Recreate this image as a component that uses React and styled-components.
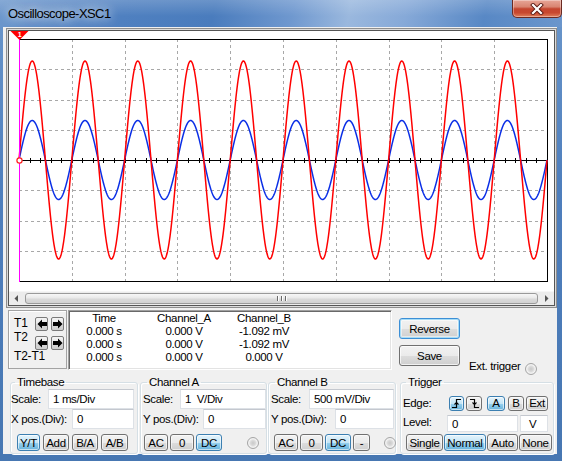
import React from 'react';
import styled, { createGlobalStyle, css } from 'styled-components';

const Global = createGlobalStyle`
  html, body { margin: 0; padding: 0; overflow: hidden; background: #fff; }
  body { font-family: "Liberation Sans", Arial, sans-serif; }
  * { box-sizing: border-box; }
`;

const Window = styled.div`
  width: 562px;
  height: 461px;
  display: flex;
  flex-direction: column;
  background: linear-gradient(180deg, #6b97cb 0%, #4f7fbd 40%, #4777b2 100%);
  font-family: "Liberation Sans", Arial, sans-serif;
  font-size: 11px;
  letter-spacing: -0.35px;
  color: #000;
`;

const TitleBar = styled.div`
  height: 27px;
  flex: none;
  display: flex;
  align-items: flex-start;
  background:
    linear-gradient(180deg, rgba(255,255,255,0.18) 0%, rgba(255,255,255,0) 60%),
    linear-gradient(100deg, #6c97cc 0%, #4f80c0 22%, #4a7cbd 38%, #6f98cf 52%, #9ab8de 62%, #86a9d8 72%, #5888c5 86%, #6b96cc 100%);
`;

const Title = styled.div`
  flex: 1;
  padding-left: 8px;
  line-height: 27px;
  font-size: 13px;
  letter-spacing: -0.55px;
  color: #000;
  text-shadow: 0 0 8px rgba(255,255,255,0.9), 0 0 14px rgba(255,255,255,0.6);
`;

const CloseButton = styled.div`
  width: 50px;
  height: 18px;
  border: 1px solid #6b2a22;
  border-top: none;
  border-radius: 0 0 5px 5px;
  background: linear-gradient(180deg, #e7a597 0%, #d98572 40%, #c4452f 52%, #c8482f 75%, #e0805c 100%);
  box-shadow: inset 0 0 0 1px rgba(255,255,255,0.35);
  display: flex;
  align-items: center;
  justify-content: center;
`;

const Client = styled.div`
  flex: 1;
  margin: 0 5px 7px 3px;
  background: #f0f0f0;
  display: flex;
  flex-direction: column;
`;

const ScopePanel = styled.div`
  margin: 1px 0 0 3px;
  border: 1px solid #8e8e8e;
  padding: 1px;
  background: #dcdcdc;
`;

const Screen = styled.div`
  border: 1px solid #555;
  background: #fff;
  display: flex;
  flex-direction: column;
`;

const Plot = styled.svg`
  display: block;
  width: 545px;
  height: 260px;
`;

const HScroll = styled.div`
  height: 14px;
  display: flex;
  align-items: center;
  background: #ececec;
  border-top: 1px solid #f6f6f6;
`;

const ScrollArrow = styled.div`
  width: 15px;
  height: 13px;
  display: flex;
  align-items: center;
  justify-content: center;
`;

const Thumb = styled.div`
  flex: 1;
  height: 11px;
  margin: 0 1px;
  border: 1px solid #9a9a9a;
  border-radius: 3px;
  background: linear-gradient(180deg, #f7f7f7 0%, #e9e9e9 45%, #dadada 55%, #d2d2d2 100%);
  display: flex;
  align-items: center;
  justify-content: center;
  gap: 1px;
`;

const Grip = styled.span`
  width: 1px;
  height: 5px;
  background: #6a6a6a;
  box-shadow: 1px 0 0 #fff;
  margin: 0 1px;
`;

const Readout = styled.div`
  margin-top: 2px;
  height: 60px;
  display: flex;
  align-items: flex-start;
`;

const CursorBox = styled.div`
  margin-left: 5px;
  width: 59px;
  height: 59px;
  border: 1px solid #a3a3a3;
  box-shadow: inset 1px 1px 0 #fff;
  display: flex;
  padding-left: 5px;
`;

const CursorLabels = styled.div`
  width: 21px;
  padding-top: 6px;
  display: flex;
  flex-direction: column;
  font-size: 12px;
  letter-spacing: -0.2px;
`;

const CursorLabel = styled.div`
  line-height: 13px;
  height: 14px;
  white-space: nowrap;
  margin-top: ${p => p.$mt || 0}px;
`;

const ArrowGrid = styled.div`
  padding-top: 6px;
  display: grid;
  grid-template-columns: 13px 13px;
  column-gap: 3px;
  row-gap: 5px;
  align-content: start;
`;

const ArrowBtn = styled.div`
  width: 13px;
  height: 14px;
  border: 1px solid #7a7a7a;
  border-radius: 2px;
  background: linear-gradient(180deg, #f4f4f4 0%, #e6e6e6 50%, #d8d8d8 51%, #cdcdcd 100%);
  display: flex;
  align-items: center;
  justify-content: center;
`;

const DataTable = styled.div`
  margin-left: 1px;
  width: 324px;
  height: 60px;
  background: #fff;
  border: 1px solid;
  border-color: #a0a0a0 #ffffff #ffffff #a0a0a0;
  box-shadow: inset 1px 1px 0 #696969, inset -1px -1px 0 #e3e3e3;
  padding: 1px 0 0 2px;
  display: grid;
  grid-template-columns: 66px 94px 66px;
  grid-auto-rows: 13px;
  font-size: 11.5px;
  line-height: 13px;
`;

const Cell = styled.div`
  text-align: center;
  white-space: nowrap;
`;

const SideButtons = styled.div`
  margin-left: 7px;
  padding-top: 8px;
  display: flex;
  flex-direction: column;
  gap: 6px;
`;

const SideRow = styled.div`
  display: flex;
  align-items: flex-end;
`;

const BigButton = styled.div`
  width: 61px;
  height: 21px;
  border: 1px solid ${p => (p.$default ? '#3c8fd6' : '#707070')};
  border-radius: 3px;
  background: linear-gradient(180deg, #f2f2f2 0%, #ebebeb 50%, #dddddd 51%, #cfcfcf 100%);
  box-shadow: ${p => (p.$default ? 'inset 0 0 0 1px #a6dcf7, inset 0 0 0 2px rgba(255,255,255,0.5)' : 'inset 0 0 0 1px rgba(255,255,255,0.7)')};
  display: flex;
  align-items: center;
  justify-content: center;
  font-size: 11.5px;
`;

const ExtLabel = styled.div`
  margin-left: 9px;
  line-height: 13px;
  margin-bottom: -7px;
  font-size: 11.5px;
  white-space: nowrap;
`;

const Radio = styled.div`
  width: 12px;
  height: 12px;
  flex: none;
  border-radius: 50%;
  border: 1px solid #a5a5a5;
  background: radial-gradient(circle at 50% 50%, #c9c9c9 0%, #d9d9d9 35%, #f3f3f3 60%, #e1e1e1 100%);
  margin-left: ${p => p.$ml || 0}px;
  margin-right: ${p => p.$mr || 0}px;
  margin-bottom: ${p => p.$mb || 0}px;
`;

const Controls = styled.div`
  margin-top: 6px;
  padding-left: 7px;
  display: flex;
  align-items: flex-start;
`;

const Group = styled.fieldset`
  margin: 0 0 0 ${p => p.$ml || 0}px;
  width: ${p => p.$w}px;
  height: 78px;
  min-width: 0;
  border: 1px solid #d5dfe5;
  border-radius: 3px;
  box-shadow: inset 1px 1px 0 #fff, 1px 1px 0 #fff;
  padding: 1px ${p => p.$pr}px 0 ${p => p.$pl}px;
  display: flex;
  flex-direction: column;
`;

const Legend = styled.legend`
  margin-left: ${p => p.$ml}px;
  padding: 0 2px;
  line-height: 12px;
  font-size: 11.5px;
`;

const FieldRow = styled.div`
  height: 20px;
  display: flex;
  align-items: center;
  justify-content: space-between;
`;

const Label = styled.span`
  white-space: nowrap;
  font-size: 11.5px;
  ${p => p.$w && css`width: ${p.$w}px; flex: none;`}
  ${p => p.$up && css`position: relative; top: -${p.$up}px;`}
`;

const Field = styled.div`
  width: ${p => p.$w}px;
  height: ${p => p.$h || 20}px;
  flex: none;
  margin-left: ${p => p.$ml || 0}px;
  background: #fff;
  border: 1px solid #dde1e6;
  border-top-color: #c4c8cf;
  padding-left: ${p => p.$pl || 4}px;
  display: flex;
  align-items: center;
  font-size: 11.5px;
  white-space: nowrap;
`;

const ButtonRow = styled.div`
  margin-top: ${p => p.$mt ?? 5}px;
  margin-left: ${p => p.$ml || 0}px;
  height: ${p => p.$h || 17}px;
  display: flex;
  align-items: center;
  gap: ${p => p.$gap ?? 3}px;
`;

const Btn = styled.div`
  width: ${p => p.$w}px;
  height: ${p => p.$h || 17}px;
  flex: none;
  margin-left: ${p => p.$ml || 0}px;
  border: 1px solid ${p => (p.$on ? '#3c7fb1' : '#707070')};
  border-radius: 3px;
  background: ${p => (p.$on
    ? 'linear-gradient(180deg, #e5f4fc 0%, #c4e5f6 50%, #98d1ef 51%, #68b3db 100%)'
    : 'linear-gradient(180deg, #f2f2f2 0%, #ebebeb 50%, #dddddd 51%, #cfcfcf 100%)')};
  box-shadow: inset 0 0 0 1px rgba(255,255,255,0.6);
  display: flex;
  align-items: center;
  justify-content: center;
  font-size: 11.5px;
  letter-spacing: -0.3px;
  white-space: nowrap;
`;

const TRow = styled.div`
  height: ${p => p.$h}px;
  margin-top: ${p => p.$mt || 0}px;
  display: flex;
  align-items: center;
`;

/* ---------- drawings ---------- */

const X0 = 10, X1 = 538, YT = 8, YB = 250, YC = 129, PER = 52.8;

function wave(amp) {
  const pts = [];
  for (let x = X0; x <= X1 + 0.001; x += 0.5) {
    const y = YC - amp * Math.sin((2 * Math.PI * (x - X0)) / PER);
    pts.push(`${x.toFixed(1)},${y.toFixed(2)}`);
  }
  return pts.join(' ');
}

function ScopeDrawing() {
  const vGrid = [];
  for (let k = 1; k <= 9; k++) vGrid.push(Math.round(X0 + PER * k) + 0.5);
  const hGrid = [];
  for (let k = 1; k <= 7; k++) if (k !== 4) hGrid.push(Math.round(YT + 30.25 * k) + 0.5);
  const ticks = [];
  for (let k = 1; k < 50; k++) ticks.push(Math.round(X0 + 10.56 * k) + 0.5);
  return (
    <Plot viewBox="0 0 545 260">
      <g stroke="#a8a8a8" strokeWidth="1" strokeDasharray="3 3" shapeRendering="crispEdges">
        {vGrid.map(x => <line key={'v' + x} x1={x} y1={YT} x2={x} y2={YB} />)}
        {hGrid.map(y => <line key={'h' + y} x1={X0} y1={y} x2={X1} y2={y} />)}
      </g>
      <g stroke="#000" strokeWidth="1" shapeRendering="crispEdges" fill="none">
        <line x1={X0} y1={YT + 0.5} x2={X1 + 0.5} y2={YT + 0.5} />
        <line x1={X1 + 0.5} y1={YT} x2={X1 + 0.5} y2={YB + 0.5} />
        <line x1={X0} y1={YB + 0.5} x2={X1 + 0.5} y2={YB + 0.5} />
        <line x1={X0} y1={YC + 0.5} x2={X1} y2={YC + 0.5} />
        {ticks.map(x => <line key={'t' + x} x1={x} y1={YC - 2} x2={x} y2={YC + 3} />)}
      </g>
      <polyline points={wave(39.5)} fill="none" stroke="#0a2ee6" strokeWidth="1.5" strokeLinejoin="round" />
      <polyline points={wave(99)} fill="none" stroke="#ff0000" strokeWidth="1.5" strokeLinejoin="round" />
      <line x1={X0 + 0.5} y1={YT} x2={X0 + 0.5} y2={YB + 1} stroke="#ff00ff" strokeWidth="1" shapeRendering="crispEdges" />
      <polygon points="1.5,0 19.5,0 10.5,9" fill="#ff0000" />
      <text x="10.5" y="6" fill="#fff" fontSize="7" fontWeight="bold" textAnchor="middle" fontFamily="Liberation Sans, Arial, sans-serif">1</text>
      <circle cx={X0 + 0.5} cy={YC + 0.5} r="2.6" fill="#fff" stroke="#ff2020" strokeWidth="1.2" />
    </Plot>
  );
}

function CloseX() {
  return (
    <svg width="14" height="12" viewBox="0 0 14 12">
      <path d="M3 2 L11 10 M11 2 L3 10" stroke="#5a1a14" strokeWidth="4" strokeLinecap="square" />
      <path d="M3 2 L11 10 M11 2 L3 10" stroke="#fff" strokeWidth="2.2" strokeLinecap="square" />
    </svg>
  );
}

function TriLeft() {
  return (
    <svg width="5" height="7" viewBox="0 0 5 7"><polygon points="4,0 4,7 0.5,3.5" fill="#555" /></svg>
  );
}
function TriRight() {
  return (
    <svg width="5" height="7" viewBox="0 0 5 7"><polygon points="1,0 1,7 4.5,3.5" fill="#555" /></svg>
  );
}

function BigArrow({ dir }) {
  const pts = dir === 'left'
    ? '0.5,5 5,0.5 5,3 10,3 10,7 5,7 5,9.5'
    : '9.5,5 5,0.5 5,3 0,3 0,7 5,7 5,9.5';
  return (
    <svg width="10" height="10" viewBox="0 0 10 10"><polygon points={pts} fill="#000" /></svg>
  );
}

function EdgeIcon({ rising }) {
  const d = rising ? 'M1 9.5 H5.5 V1.5 H10' : 'M1 1.5 H5.5 V9.5 H10';
  const arrow = rising ? 'M3.5 6.5 L5.5 4.5 L7.5 6.5' : 'M3.5 4.5 L5.5 6.5 L7.5 4.5';
  return (
    <svg width="11" height="11" viewBox="0 0 11 11">
      <path d={d} stroke="#000" strokeWidth="1.2" fill="none" />
      <path d={arrow} stroke="#000" strokeWidth="1.1" fill="none" />
    </svg>
  );
}

export default function App() {
  return (
    <>
      <Global />
      <Window>
        <TitleBar>
          <Title>Oscilloscope-XSC1</Title>
          <CloseButton><CloseX /></CloseButton>
        </TitleBar>
        <Client>
          <ScopePanel>
            <Screen>
              <ScopeDrawing />
              <HScroll>
                <ScrollArrow><TriLeft /></ScrollArrow>
                <Thumb><Grip /><Grip /><Grip /></Thumb>
                <ScrollArrow><TriRight /></ScrollArrow>
              </HScroll>
            </Screen>
          </ScopePanel>

          <Readout>
            <CursorBox>
              <CursorLabels>
                <CursorLabel>T1</CursorLabel>
                <CursorLabel>T2</CursorLabel>
                <CursorLabel $mt={5}>T2-T1</CursorLabel>
              </CursorLabels>
              <ArrowGrid>
                <ArrowBtn><BigArrow dir="left" /></ArrowBtn>
                <ArrowBtn><BigArrow dir="right" /></ArrowBtn>
                <ArrowBtn><BigArrow dir="left" /></ArrowBtn>
                <ArrowBtn><BigArrow dir="right" /></ArrowBtn>
              </ArrowGrid>
            </CursorBox>
            <DataTable>
              <Cell>Time</Cell><Cell>Channel_A</Cell><Cell>Channel_B</Cell>
              <Cell>0.000 s</Cell><Cell>0.000 V</Cell><Cell>-1.092 mV</Cell>
              <Cell>0.000 s</Cell><Cell>0.000 V</Cell><Cell>-1.092 mV</Cell>
              <Cell>0.000 s</Cell><Cell>0.000 V</Cell><Cell>0.000 V</Cell>
            </DataTable>
            <SideButtons>
              <BigButton $default>Reverse</BigButton>
              <SideRow>
                <BigButton>Save</BigButton>
                <ExtLabel>Ext. trigger</ExtLabel>
                <Radio $ml={5} $mb={-9} />
              </SideRow>
            </SideButtons>
          </Readout>

          <Controls>
            <Group $w={128} $pl={0} $pr={3}>
              <Legend $ml={4}>Timebase</Legend>
              <FieldRow>
                <Label>Scale:</Label>
                <Field $w={86}>1 ms/Div</Field>
              </FieldRow>
              <FieldRow>
                <Label>X pos.(Div):</Label>
                <Field $w={62}>0</Field>
              </FieldRow>
              <ButtonRow $ml={6} $gap={3}>
                <Btn $w={23} $on>Y/T</Btn>
                <Btn $w={26}>Add</Btn>
                <Btn $w={26}>B/A</Btn>
                <Btn $w={27}>A/B</Btn>
              </ButtonRow>
            </Group>

            <Group $ml={2} $w={127} $pl={2} $pr={0}>
              <Legend $ml={4}>Channel A</Legend>
              <FieldRow>
                <Label>Scale:</Label>
                <Field $w={86}>1&nbsp;&nbsp;V/Div</Field>
              </FieldRow>
              <FieldRow>
                <Label>Y pos.(Div):</Label>
                <Field $w={63}>0</Field>
              </FieldRow>
              <ButtonRow $ml={1} $gap={2}>
                <Btn $w={24}>AC</Btn>
                <Btn $w={24}>0</Btn>
                <Btn $w={26} $on>DC</Btn>
                <Radio $ml={23} />
              </ButtonRow>
            </Group>

            <Group $ml={1} $w={128} $pl={2} $pr={1}>
              <Legend $ml={4}>Channel B</Legend>
              <FieldRow>
                <Label>Scale:</Label>
                <Field $w={85}>500 mV/Div</Field>
              </FieldRow>
              <FieldRow>
                <Label>Y pos.(Div):</Label>
                <Field $w={59}>0</Field>
              </FieldRow>
              <ButtonRow $ml={3} $gap={2}>
                <Btn $w={24}>AC</Btn>
                <Btn $w={23}>0</Btn>
                <Btn $w={26} $on>DC</Btn>
                <Btn $w={17}>-</Btn>
                <Radio $ml={12} />
              </ButtonRow>
            </Group>

            <Group $ml={4} $w={154} $pl={2} $pr={0}>
              <Legend $ml={3}>Trigger</Legend>
              <TRow $h={22} $mt={3}>
                <Label $w={46}>Edge:</Label>
                <Btn $w={15} $h={15} $on><EdgeIcon rising /></Btn>
                <Btn $w={16} $h={15} $ml={2}><EdgeIcon /></Btn>
                <Btn $w={18} $h={15} $ml={5} $on>A</Btn>
                <Btn $w={16} $h={15} $ml={3}>B</Btn>
                <Btn $w={22} $h={15} $ml={2}>Ext</Btn>
              </TRow>
              <TRow $h={17} $mt={1}>
                <Label $w={44} $up={2}>Level:</Label>
                <Field $w={71} $h={17}>0</Field>
                <Field $w={28} $h={17} $pl={8} $ml={2}>V</Field>
              </TRow>
              <ButtonRow $mt={2} $ml={3} $gap={1}>
                <Btn $w={37}>Single</Btn>
                <Btn $w={42} $on>Normal</Btn>
                <Btn $w={31}>Auto</Btn>
                <Btn $w={33}>None</Btn>
              </ButtonRow>
            </Group>
          </Controls>
        </Client>
      </Window>
    </>
  );
}
